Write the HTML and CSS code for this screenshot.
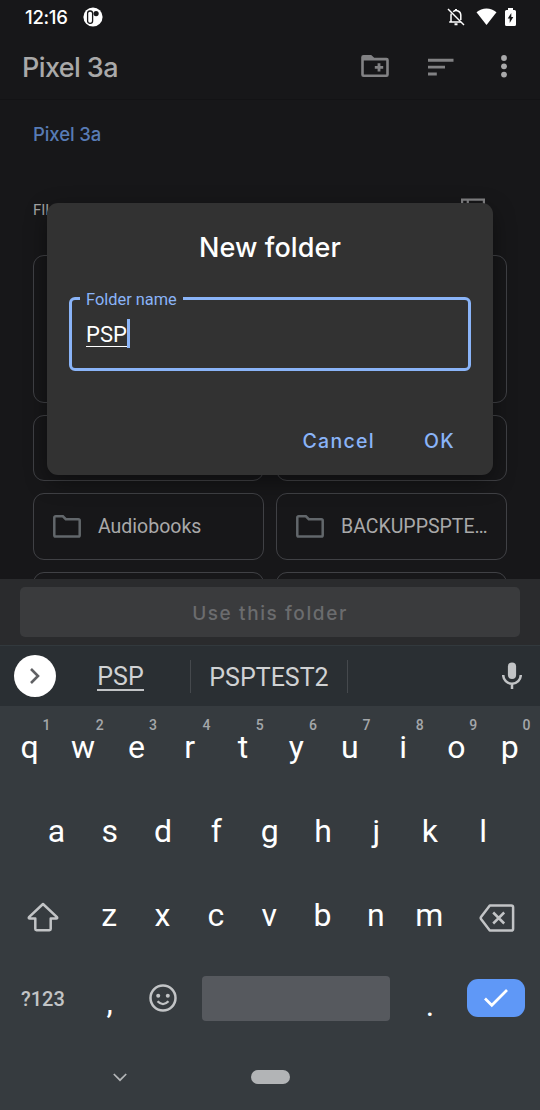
FILE: index.html
```html
<!DOCTYPE html>
<html lang="en">
<head>
<meta charset="utf-8">
<title>New folder</title>
<link rel="stylesheet" href="styles.css">
</head>
<body>
<div class="phone">
  <div class="files">
    <div class="status">
      <span class="clock">12:16</span>
      <svg class="app-badge" width="20" height="20" viewBox="0 0 20 20"><circle cx="10" cy="10" r="9.6" fill="#fff"/><rect x="4.600" y="4" width="5" height="12.300" rx="2.300" fill="#fff" stroke="#171719" stroke-width="1.300"/><circle cx="13.100" cy="6.600" r="2.600" fill="#171719"/></svg>
      <svg class="bell" width="18" height="18" viewBox="0 0 18 18" fill="none" stroke="#fff" stroke-width="1.500"><path d="M1 1l16 16"/><path d="M4 13.700V7.500c0-.7.1-1.300.4-2M6.200 3.700A4.600 4.600 0 0 1 13.800 7v5M2.200 14h11.600"/><path d="M9 1v2M7.500 16.300h3" stroke-width="2"/></svg>
      <svg class="wifi" width="21" height="18" viewBox="0 0 21 18"><path d="M0.500 4.300C6-.8 15-.8 20.500 4.300L10.500 17z" fill="#fff"/></svg>
      <svg class="battery" width="11" height="18" viewBox="0 0 11 18"><path d="M3 0h5v2h1.500A1.500 1.500 0 0 1 11 3.500v13A1.500 1.500 0 0 1 9.500 18h-8A1.500 1.500 0 0 1 0 16.500v-13A1.500 1.500 0 0 1 1.500 2H3z" fill="#fff"/><path d="M6.300 5v4h2l-3.600 6v-4.600h-2z" fill="#171719"/></svg>
    </div>
    <div class="toolbar">
      <h1 class="title">Pixel 3a</h1>
      <svg class="tool-add" width="28" height="23" viewBox="0 0 28 23"><path d="M2.500 0h7.700l3 2.800h12.300a2.300 2.300 0 0 1 2.300 2.300v14.700a2.300 2.300 0 0 1-2.300 2.300h-23A2.300 2.300 0 0 1 .2 19.800V2.300A2.300 2.300 0 0 1 2.500 0zM2.800 5.500v14h22.400v-14z" fill="#828284" fill-rule="evenodd"/><path d="M18 8.200v8.400M13.800 12.400h8.400" stroke="#828284" stroke-width="2.800"/></svg>
      <svg class="tool-sort" width="26" height="18" viewBox="0 0 26 18" fill="#828284"><path d="M0 .8h25.500v2.900H0zM0 7.700h17v2.900H0zM0 14.500h8.800v2.900H0z"/></svg>
      <svg class="tool-more" width="6" height="23" viewBox="0 0 6 23" fill="#a9a9aa"><circle cx="3" cy="3" r="2.900"/><circle cx="3" cy="11.300" r="2.900"/><circle cx="3" cy="19.600" r="2.900"/></svg>
    </div>
    <div class="breadcrumb">Pixel 3a</div>
    <div class="section">
      <span>FILES ON PIXEL 3A</span>
      <svg width="24" height="20" viewBox="0 0 24 20" fill="none" stroke="#828284" stroke-width="2.200"><path d="M1.100 1.600h21.800v16.800H1.100zM6.800 2v16M1 7.200h22M1 12.800h22"/></svg>
    </div>
    <div class="grid">
      <div class="card card-tall"></div>
      <div class="card"></div>
      <div class="card"></div>
      <div class="card">
        <svg class="folder" width="28" height="23" viewBox="0 0 28 23"><path d="M2.600 1.300h7.300l2.900 2.900h12.600a1.300 1.300 0 0 1 1.300 1.300v14.800a1.300 1.300 0 0 1-1.300 1.300H2.600a1.300 1.300 0 0 1-1.300-1.300V2.600a1.300 1.300 0 0 1 1.300-1.300z" fill="none" stroke="#62676b" stroke-width="2.500"/></svg>
        <span class="name">Audiobooks</span>
      </div>
      <div class="card">
        <svg class="folder" width="28" height="23" viewBox="0 0 28 23"><path d="M2.600 1.300h7.300l2.900 2.900h12.600a1.300 1.300 0 0 1 1.300 1.300v14.800a1.300 1.300 0 0 1-1.300 1.300H2.600a1.300 1.300 0 0 1-1.300-1.300V2.600a1.300 1.300 0 0 1 1.300-1.300z" fill="none" stroke="#62676b" stroke-width="2.500"/></svg>
        <span class="name">BACKUPPSPTE…</span>
      </div>
      <div class="card"></div>
      <div class="card"></div>
    </div>
  </div>
  <div class="confirm"><div class="use"><span>Use this folder</span></div></div>

  <div class="keyboard">
    <div class="suggest">
      <div class="expand"><svg width="12" height="18" viewBox="0 0 12 18"><path d="M2 2l7 7-7 7" fill="none" stroke="#606164" stroke-width="2.600"/></svg></div>
      <div class="word first"><span>PSP</span></div>
      <div class="word second"><span>PSPTEST2</span></div>
      <svg class="mic" width="20" height="28" viewBox="0 0 20 28"><rect x="5.900" y=".5" width="8.200" height="16.500" rx="4.100" fill="#c2c4c6"/><path d="M1.200 13a8.800 8.800 0 0 0 17.600 0M10 21.500V27" fill="none" stroke="#c2c4c6" stroke-width="2.500"/></svg>
    </div>
    <div class="row row-q">
      <div class="key">q<sup>1</sup></div><div class="key">w<sup>2</sup></div><div class="key">e<sup>3</sup></div><div class="key">r<sup>4</sup></div><div class="key">t<sup>5</sup></div><div class="key">y<sup>6</sup></div><div class="key">u<sup>7</sup></div><div class="key">i<sup>8</sup></div><div class="key">o<sup>9</sup></div><div class="key">p<sup>0</sup></div>
    </div>
    <div class="row row-a">
      <div class="key">a</div><div class="key">s</div><div class="key">d</div><div class="key">f</div><div class="key">g</div><div class="key">h</div><div class="key">j</div><div class="key">k</div><div class="key">l</div>
    </div>
    <div class="row row-z">
      <div class="wide shift"><svg width="32" height="30" viewBox="0 0 32 30"><path d="M16 2L2 15.200q-.8 1.300.8 1.300H8.300V27q0 1.200 1.200 1.200h13q1.200 0 1.200-1.200V16.500h5.500q1.600 0 .8-1.300z" fill="none" stroke="#c2c4c6" stroke-width="2.500" stroke-linejoin="round"/></svg></div>
      <div class="key">z</div><div class="key">x</div><div class="key">c</div><div class="key">v</div><div class="key">b</div><div class="key">n</div><div class="key">m</div>
      <div class="wide back"><svg width="36" height="28" viewBox="0 0 36 28" fill="none" stroke="#c2c4c6" stroke-width="2.500"><path d="M10.800 1.400h21.400q1.900 0 1.900 1.900v21.400q0 1.900-1.900 1.900H10.800L2.200 15.300q-1-1.300 0-2.600zM14.200 8.500l11 11M25.200 8.500l-11 11" stroke-linejoin="round"/></svg></div>
    </div>
    <div class="row row-space">
      <div class="wide symbols">?123</div>
      <div class="key mark">,</div>
      <div class="key emoji"><svg width="28" height="28" viewBox="0 0 28 28"><circle cx="14" cy="14" r="12.500" fill="none" stroke="#c2c4c6" stroke-width="2.500"/><circle cx="9.200" cy="11.700" r="2" fill="#c2c4c6"/><circle cx="18.800" cy="11.700" r="2" fill="#c2c4c6"/><path d="M8.500 17.300q5.500 5.600 11 0" fill="none" stroke="#c2c4c6" stroke-width="2.300"/></svg></div>
      <div class="space"></div>
      <div class="key mark dot">.</div>
      <div class="enter"><svg width="26" height="20" viewBox="0 0 26 20"><path d="M2 10.500l6.800 6.800L24 2" fill="none" stroke="#fff" stroke-width="2.700"/></svg></div>
    </div>
    <div class="nav">
      <svg class="hide" width="14" height="9" viewBox="0 0 14 9"><path d="M.8 1l6.200 6.200L13.200 1" fill="none" stroke="#b4b6b8" stroke-width="1.700"/></svg>
      <div class="pill"></div>
    </div>
  </div>

  <div class="dialog">
    <h2 class="heading"><span>New folder</span></h2>
    <div class="field">
      <span class="label">Folder name</span>
      <span class="value">PSP</span><span class="caret"></span>
    </div>
    <div class="actions"><span class="cancel">Cancel</span><span class="ok">OK</span></div>
  </div>
</div>
</body>
</html>
```
FILE: styles.css
```css
* { box-sizing: border-box; }
body { margin: 0; background: #171719; font-family: Roboto, "Liberation Sans", sans-serif; }
.phone { position: relative; width: 540px; height: 1110px; overflow: hidden; display: flex; flex-direction: column; }
svg { display: block; flex: none; }

.files { height: 579px; overflow: hidden; background: #171719; }
.status { display: flex; align-items: center; height: 34px; padding: 0 24.500px 0 25px; color: #fff; }
.clock { width: 58px; font: 500 18.500px/34px Inter, Roboto, sans-serif; letter-spacing: -.3px; }
.bell { margin-left: auto; margin-right: 11px; }
.wifi { margin-right: 8px; }
.toolbar { display: flex; align-items: center; height: 66px; padding: 0 33px 0 22px; border-bottom: 1px solid #131315; }
.title { margin: 2px auto 0 0; font: 500 27px/34px Inter, Roboto, sans-serif; letter-spacing: -.6px; color: #a9a9a9; }
.tool-add { margin-right: 39px; }
.tool-sort { margin-right: 47px; }
.breadcrumb { height: 68px; padding-left: 33px; font: 500 18.500px/68px Inter, Roboto, sans-serif; letter-spacing: -.1px; color: #577bb5; }
.section { display: flex; align-items: center; justify-content: space-between; height: 80px; padding: 0 55px 0 33px; font-size: 15px; color: #a2a2a2; }
.section span { padding-top: 3px; }
.grid { display: grid; grid-template-columns: 231px 231px; grid-template-rows: 148.300px 66.500px 66.500px 66.500px; gap: 12px; padding: 6.500px 33px 0; }
.card { display: flex; align-items: center; padding: 0 18px 0 19px; border: 1.500px solid #404145; border-radius: 11px; }
.card-tall { grid-column: 1 / 3; }
.folder { margin-right: 17px; }
.name { font-size: 19.500px; color: #a9a9a9; white-space: nowrap; }

.confirm { height: 67px; padding: 8px 20px 0; background: #2a2b2d; border-bottom: 1px solid #32393d; }
.use { height: 50px; border-radius: 5px; background: #3a3b3d; text-align: center; font: 500 19px/53px Inter, Roboto, sans-serif; letter-spacing: 1.600px; color: #6b6c6e; }

.keyboard { height: 464px; background: #363b3f; color: #fff; }
.suggest { display: flex; align-items: center; height: 60px; padding: 0 18px 0 14px; background: #2a2f33; color: #d0d2d4; font-size: 25px; }
.expand { display: flex; align-items: center; justify-content: center; width: 42px; height: 42px; border-radius: 50%; background: #fff; }
.word { display: flex; align-items: center; justify-content: center; height: 33px; padding-top: 2px; border-right: 1.500px solid #45494d; }
.first { width: 135px; padding-right: 5px; }
.second { width: 157px; }
.first span { line-height: 25px; border-bottom: 2px solid #c2c4c6; }
.mic { margin-left: auto; }
.row { display: flex; align-items: center; height: 84px; }
.key { display: flex; align-items: center; justify-content: center; width: 53.350px; height: 84px; padding-bottom: 2px; position: relative; font-size: 32px; line-height: 38px; }
.key sup { position: absolute; top: 10px; right: 6px; font-size: 14px; line-height: 18px; font-weight: 500; color: #a4a7aa; }
.row-q { padding-left: 3px; }
.row-a { padding-left: 29.700px; }
.wide { display: flex; align-items: center; width: 82.500px; height: 84px; }
.shift { padding: 2px 0 0 27px; }
.back { padding: 4px 0 0 23px; }
.symbols { padding: 1px 0 0 21px; font-size: 20px; font-weight: 500; color: #c2c4c6; }
.row-space { height: 80px; }
.emoji { padding-bottom: 0; }
.space { width: 188px; height: 45px; margin-left: 13px; border-radius: 4px; background: #56595e; }
.mark { padding: 7px 0 0 1px; }
.dot { margin-left: 13px; padding: 14px 0 0; }
.enter { display: flex; align-items: center; justify-content: center; width: 58px; height: 38px; margin-left: 10.500px; border-radius: 11px; background: #5f98f7; }
.nav { display: flex; align-items: center; height: 72px; padding: 6px 0 0 113px; }
.pill { width: 39px; height: 14px; margin-left: 124px; border-radius: 7px; background: #b2b4b6; }

.dialog { position: absolute; left: 47px; top: 203px; width: 446px; height: 272px; padding: 25px 22px 0; border-radius: 11px; background: #323232; box-shadow: 0 7px 22px rgba(0,0,0,.4); }
.heading { margin: 0; text-align: center; font: 500 27px/40px Inter, Roboto, sans-serif; letter-spacing: .1px; color: #fff; }
.field { position: relative; display: flex; align-items: center; height: 73.500px; margin-top: 29px; padding: 2px 0 0 14px; border: 3px solid #8ab4f8; border-radius: 6px; }
.label { position: absolute; left: 8px; top: -10px; padding: 0 6px; background: #323232; color: #8ab4f8; font-size: 16.400px; line-height: 20px; white-space: nowrap; }
.value { color: #fff; font-size: 22px; line-height: 23px; border-bottom: 1px solid #fff; }
.caret { width: 3px; height: 29px; margin-top: -2px; background: #8ab4f8; }
.actions { display: flex; justify-content: flex-end; margin-top: 54.500px; padding-right: 16px; font: 500 19.500px/32px Inter, Roboto, sans-serif; letter-spacing: 1.300px; color: #8ab4f8; }
.ok { margin-left: 49px; }
```
